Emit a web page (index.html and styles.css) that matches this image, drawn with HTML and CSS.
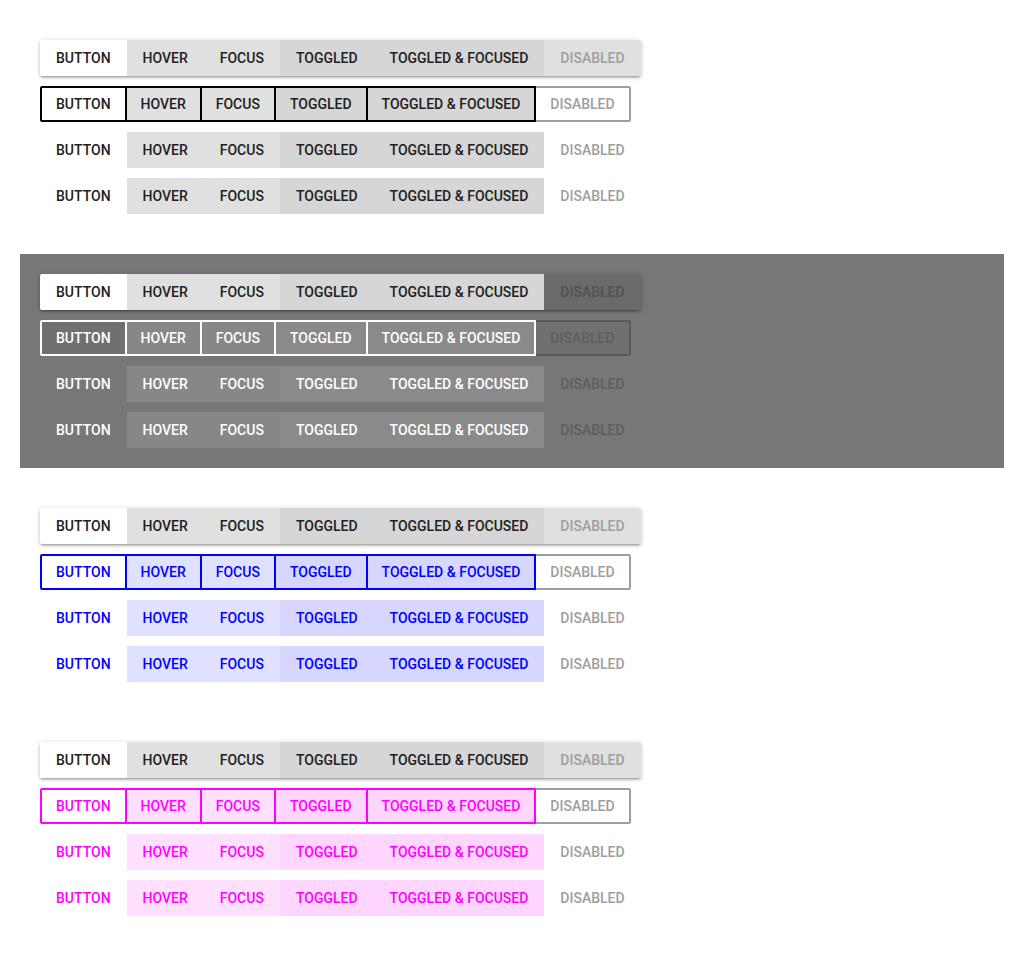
FILE: index.html
```html
<!DOCTYPE html>
<html lang="en">
<head>
<meta charset="utf-8">
<title>Buttons</title>
<link rel="stylesheet" href="styles.css">
</head>
<body>
  <section class="section light">
    <div class="row raised">
      <span class="btn">BUTTON</span><span class="btn hover">HOVER</span><span class="btn focus">FOCUS</span><span class="btn toggled">TOGGLED</span><span class="btn toggled focus">TOGGLED &amp; FOCUSED</span><span class="btn disabled">DISABLED</span>
    </div>
    <div class="row outlined">
      <span class="btn">BUTTON</span><span class="btn hover">HOVER</span><span class="btn focus">FOCUS</span><span class="btn toggled">TOGGLED</span><span class="btn toggled focus">TOGGLED &amp; FOCUSED</span><span class="btn disabled">DISABLED</span>
    </div>
    <div class="row flat">
      <span class="btn">BUTTON</span><span class="btn hover">HOVER</span><span class="btn focus">FOCUS</span><span class="btn toggled">TOGGLED</span><span class="btn toggled focus">TOGGLED &amp; FOCUSED</span><span class="btn disabled">DISABLED</span>
    </div>
    <div class="row flat">
      <span class="btn">BUTTON</span><span class="btn hover">HOVER</span><span class="btn focus">FOCUS</span><span class="btn toggled">TOGGLED</span><span class="btn toggled focus">TOGGLED &amp; FOCUSED</span><span class="btn disabled">DISABLED</span>
    </div>
  </section>

  <section class="section dark">
    <div class="row raised">
      <span class="btn">BUTTON</span><span class="btn hover">HOVER</span><span class="btn focus">FOCUS</span><span class="btn toggled">TOGGLED</span><span class="btn toggled focus">TOGGLED &amp; FOCUSED</span><span class="btn disabled">DISABLED</span>
    </div>
    <div class="row outlined">
      <span class="btn">BUTTON</span><span class="btn hover">HOVER</span><span class="btn focus">FOCUS</span><span class="btn toggled">TOGGLED</span><span class="btn toggled focus">TOGGLED &amp; FOCUSED</span><span class="btn disabled">DISABLED</span>
    </div>
    <div class="row flat">
      <span class="btn">BUTTON</span><span class="btn hover">HOVER</span><span class="btn focus">FOCUS</span><span class="btn toggled">TOGGLED</span><span class="btn toggled focus">TOGGLED &amp; FOCUSED</span><span class="btn disabled">DISABLED</span>
    </div>
    <div class="row flat">
      <span class="btn">BUTTON</span><span class="btn hover">HOVER</span><span class="btn focus">FOCUS</span><span class="btn toggled">TOGGLED</span><span class="btn toggled focus">TOGGLED &amp; FOCUSED</span><span class="btn disabled">DISABLED</span>
    </div>
  </section>

  <section class="section blue">
    <div class="row raised">
      <span class="btn">BUTTON</span><span class="btn hover">HOVER</span><span class="btn focus">FOCUS</span><span class="btn toggled">TOGGLED</span><span class="btn toggled focus">TOGGLED &amp; FOCUSED</span><span class="btn disabled">DISABLED</span>
    </div>
    <div class="row outlined">
      <span class="btn">BUTTON</span><span class="btn hover">HOVER</span><span class="btn focus">FOCUS</span><span class="btn toggled">TOGGLED</span><span class="btn toggled focus">TOGGLED &amp; FOCUSED</span><span class="btn disabled">DISABLED</span>
    </div>
    <div class="row flat">
      <span class="btn">BUTTON</span><span class="btn hover">HOVER</span><span class="btn focus">FOCUS</span><span class="btn toggled">TOGGLED</span><span class="btn toggled focus">TOGGLED &amp; FOCUSED</span><span class="btn disabled">DISABLED</span>
    </div>
    <div class="row flat">
      <span class="btn">BUTTON</span><span class="btn hover">HOVER</span><span class="btn focus">FOCUS</span><span class="btn toggled">TOGGLED</span><span class="btn toggled focus">TOGGLED &amp; FOCUSED</span><span class="btn disabled">DISABLED</span>
    </div>
  </section>

  <section class="section magenta">
    <div class="row raised">
      <span class="btn">BUTTON</span><span class="btn hover">HOVER</span><span class="btn focus">FOCUS</span><span class="btn toggled">TOGGLED</span><span class="btn toggled focus">TOGGLED &amp; FOCUSED</span><span class="btn disabled">DISABLED</span>
    </div>
    <div class="row outlined">
      <span class="btn">BUTTON</span><span class="btn hover">HOVER</span><span class="btn focus">FOCUS</span><span class="btn toggled">TOGGLED</span><span class="btn toggled focus">TOGGLED &amp; FOCUSED</span><span class="btn disabled">DISABLED</span>
    </div>
    <div class="row flat">
      <span class="btn">BUTTON</span><span class="btn hover">HOVER</span><span class="btn focus">FOCUS</span><span class="btn toggled">TOGGLED</span><span class="btn toggled focus">TOGGLED &amp; FOCUSED</span><span class="btn disabled">DISABLED</span>
    </div>
    <div class="row flat">
      <span class="btn">BUTTON</span><span class="btn hover">HOVER</span><span class="btn focus">FOCUS</span><span class="btn toggled">TOGGLED</span><span class="btn toggled focus">TOGGLED &amp; FOCUSED</span><span class="btn disabled">DISABLED</span>
    </div>
  </section>
</body>
</html>
```

FILE: styles.css
```css
html, body {
  margin: 0;
  background: #ffffff;
}

body {
  padding: 20px;
  font-family: Roboto, "Noto Sans", "Liberation Sans", sans-serif;
}

.section {
  padding: 20px;
  margin-bottom: 20px;
}

.section:last-child {
  margin-bottom: 0;
}

.light {
  --fg: #212121;
  --hover: #e0e0e0;
  --toggled: #d6d6d6;
  --dis: #9e9e9e;
  --outline: #000000;
  --dis-outline: #9e9e9e;
  --base: #ffffff;
  --raised-dis-bg: #e0e0e0;
  --raised-dis-fg: #9e9e9e;
}

.dark {
  background: #777777;
  --fg: #ffffff;
  --hover: #878787;
  --toggled: #8a8a8a;
  --dis: #5e5e5e;
  --outline: #ffffff;
  --dis-outline: #585858;
  --base: #707070;
  --raised-dis-bg: #6a6a6a;
  --raised-dis-fg: #525252;
}

.blue {
  --fg: #0000ff;
  --hover: #e0e0ff;
  --toggled: #d6d6ff;
  --dis: #9e9e9e;
  --outline: #0000ff;
  --dis-outline: #9e9e9e;
  --base: #ffffff;
  --raised-dis-bg: #e0e0e0;
  --raised-dis-fg: #9e9e9e;
}

.magenta {
  --fg: #ff00ff;
  --hover: #ffe0ff;
  --toggled: #ffd6ff;
  --dis: #9e9e9e;
  --outline: #ff00ff;
  --dis-outline: #9e9e9e;
  --base: #ffffff;
  --raised-dis-bg: #e0e0e0;
  --raised-dis-fg: #9e9e9e;
}

.row {
  display: flex;
  width: max-content;
  height: 36px;
  margin-bottom: 10px;
}

.row:last-child {
  margin-bottom: 0;
}

.btn {
  display: block;
  box-sizing: border-box;
  height: 36px;
  padding: 0 16px;
  font-size: 14px;
  font-weight: 500;
  line-height: 36px;
  white-space: nowrap;
  color: var(--fg);
  background: transparent;
}

/* flat */
.flat .hover,
.flat .focus {
  background: var(--hover);
}

.flat .toggled {
  background: var(--toggled);
}

.flat .disabled {
  background: transparent;
  color: var(--dis);
}

/* raised */
.raised {
  border-radius: 2px;
  overflow: hidden;
  box-shadow: 0 2px 2px 0 rgba(0, 0, 0, 0.14), 0 3px 1px -2px rgba(0, 0, 0, 0.12), 0 1px 5px 0 rgba(0, 0, 0, 0.2);
}

.raised .btn {
  color: #212121;
  background: #ffffff;
}

.raised .hover,
.raised .focus {
  background: #e0e0e0;
}

.raised .toggled {
  background: #d6d6d6;
}

.raised .disabled {
  background: var(--raised-dis-bg);
  color: var(--raised-dis-fg);
}

/* outlined */
.outlined .btn {
  position: relative;
  z-index: 1;
  padding: 0 14px;
  line-height: 32px;
  border: 2px solid var(--outline);
  background: var(--base);
}

.outlined .btn + .btn {
  margin-left: -2px;
}

.outlined .btn:first-child {
  border-radius: 2px 0 0 2px;
}

.outlined .btn:last-child {
  border-radius: 0 2px 2px 0;
}

.outlined .hover,
.outlined .focus {
  background: var(--hover);
}

.outlined .toggled {
  background: var(--toggled);
}

.outlined .disabled {
  z-index: 0;
  border-color: var(--dis-outline);
  color: var(--dis);
  background: var(--base);
}
```
